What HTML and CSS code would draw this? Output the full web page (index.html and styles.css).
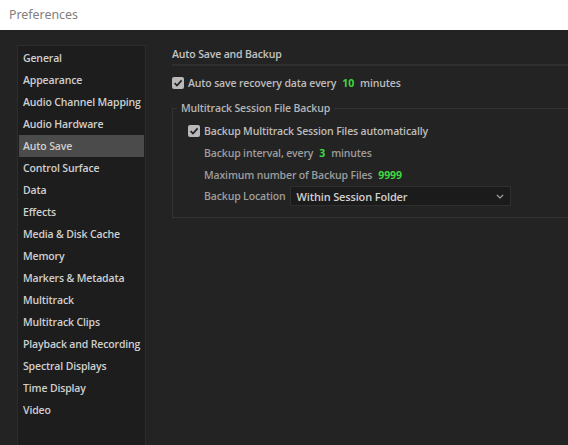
FILE: index.html
```html
<!DOCTYPE html>
<html lang="en">
<head>
    <meta charset="UTF-8">
    <title>Preferences</title>
    <link rel="stylesheet" href="styles.css">
</head>
<body>
    <div class="titlebar">Preferences</div>
    <main class="window">
        <nav class="kategorier">
            <div class="punkt">General</div>
            <div class="punkt">Appearance</div>
            <div class="punkt">Audio Channel Mapping</div>
            <div class="punkt">Audio Hardware</div>
            <div class="punkt valgt">Auto Save</div>
            <div class="punkt">Control Surface</div>
            <div class="punkt">Data</div>
            <div class="punkt">Effects</div>
            <div class="punkt">Media &amp; Disk Cache</div>
            <div class="punkt">Memory</div>
            <div class="punkt">Markers &amp; Metadata</div>
            <div class="punkt">Multitrack</div>
            <div class="punkt">Multitrack Clips</div>
            <div class="punkt">Playback and Recording</div>
            <div class="punkt">Spectral Displays</div>
            <div class="punkt">Time Display</div>
            <div class="punkt">Video</div>
        </nav>
        <section class="indhold">
            <h2 class="overskrift">Auto Save and Backup</h2>
            <div class="raekke">
                <span class="boks"><svg viewBox="0 0 12 12" width="12" height="12"><path d="M2.6 6.2 L5 8.6 L9.6 3.4" fill="none" stroke="#222" stroke-width="1.7"/></svg></span>
                <span>Auto save recovery data every</span>
                <span class="tal">10</span>
                <span>minutes</span>
            </div>
            <fieldset class="gruppe">
                <legend>Multitrack Session File Backup</legend>
                <div class="raekke forste">
                    <span class="boks"><svg viewBox="0 0 12 12" width="12" height="12"><path d="M2.6 6.2 L5 8.6 L9.6 3.4" fill="none" stroke="#222" stroke-width="1.7"/></svg></span>
                    <span>Backup Multitrack Session Files automatically</span>
                </div>
                <div class="raekke dim">
                    <span>Backup interval, every</span>
                    <span class="tal">3</span>
                    <span>minutes</span>
                </div>
                <div class="raekke dim">
                    <span>Maximum number of Backup Files</span>
                    <span class="tal">9999</span>
                </div>
                <div class="raekke dim lokation">
                    <span>Backup Location</span>
                    <div class="dropdown">
                        <span>Within Session Folder</span>
                        <svg viewBox="0 0 8 5" width="8" height="5"><path d="M0.8 0.8 L4 4 L7.2 0.8" fill="none" stroke="#aaa" stroke-width="1.1"/></svg>
                    </div>
                </div>
            </fieldset>
        </section>
    </main>
</body>
</html>
```

FILE: styles.css
```css
html, body {
    margin: 0;
    height: 100%;
    background-color: #232323;
    font-family: "Open Sans", "Noto Sans", sans-serif;
    font-size: 10.5px;
    letter-spacing: -0.15px;
    overflow: hidden;
}
.titlebar {
    height: 30px;
    background-color: white;
    color: #808080;
    font-family: "Noto Sans", sans-serif;
    font-size: 12.4px;
    letter-spacing: 0;
    line-height: 30px;
    padding-left: 9px;
}
.window {
    display: flex;
    height: 415px;
    padding: 15px 0 0 17px;
    box-sizing: border-box;
}
.kategorier {
    width: 129px;
    height: 420px;
    background-color: #1d1d1d;
    border: 1px solid #2d2d2d;
    box-sizing: border-box;
    padding: 1px 1px 0 1px;
}
.punkt {
    height: 22px;
    line-height: 22px;
    padding-left: 4px;
    color: #cfcfcf;
    font-weight: 600;
    white-space: nowrap;
}
.valgt {
    background-color: #4b4b4b;
}
.indhold {
    flex: 1;
    margin-left: 26px;
    color: #bdbdbd;
}
.overskrift {
    font-size: 10.5px;
    font-weight: 600;
    margin: 0;
    height: 19px;
    line-height: 19px;
    border-bottom: 2px solid #2f2f2f;
    color: #c4c4c4;
}
.raekke {
    display: flex;
    align-items: center;
    gap: 4px;
    height: 22px;
    margin-top: 6px;
    font-weight: 600;
    white-space: nowrap;
}
.boks {
    width: 12px;
    height: 12px;
    border-radius: 2px;
    background-color: #b9b9b9;
    display: inline-flex;
}
.tal {
    color: #3fd93f;
    font-weight: 700;
    padding: 0 2px;
}
.dim {
    color: #9d9d9d;
    margin-top: 0;
    padding-left: 31px;
}
.lokation {
    margin-top: -1px;
}
.gruppe {
    margin: 7px -20px 0 0;
    border: 1px solid #333;
    padding: 0 0 10px 0;
}
.gruppe legend {
    padding: 0 4px;
    margin-left: 4px;
    color: #b5b5b5;
    font-weight: 600;
}
.forste {
    margin-top: 5px;
    padding-left: 15px;
}
.dropdown {
    display: flex;
    align-items: center;
    justify-content: space-between;
    width: 221px;
    height: 20px;
    box-sizing: border-box;
    padding: 0 6px 0 6px;
    background-color: #1b1b1b;
    border: 1px solid #2e2e2e;
    color: #d0d0d0;
    font-size: 11px;
}
```
